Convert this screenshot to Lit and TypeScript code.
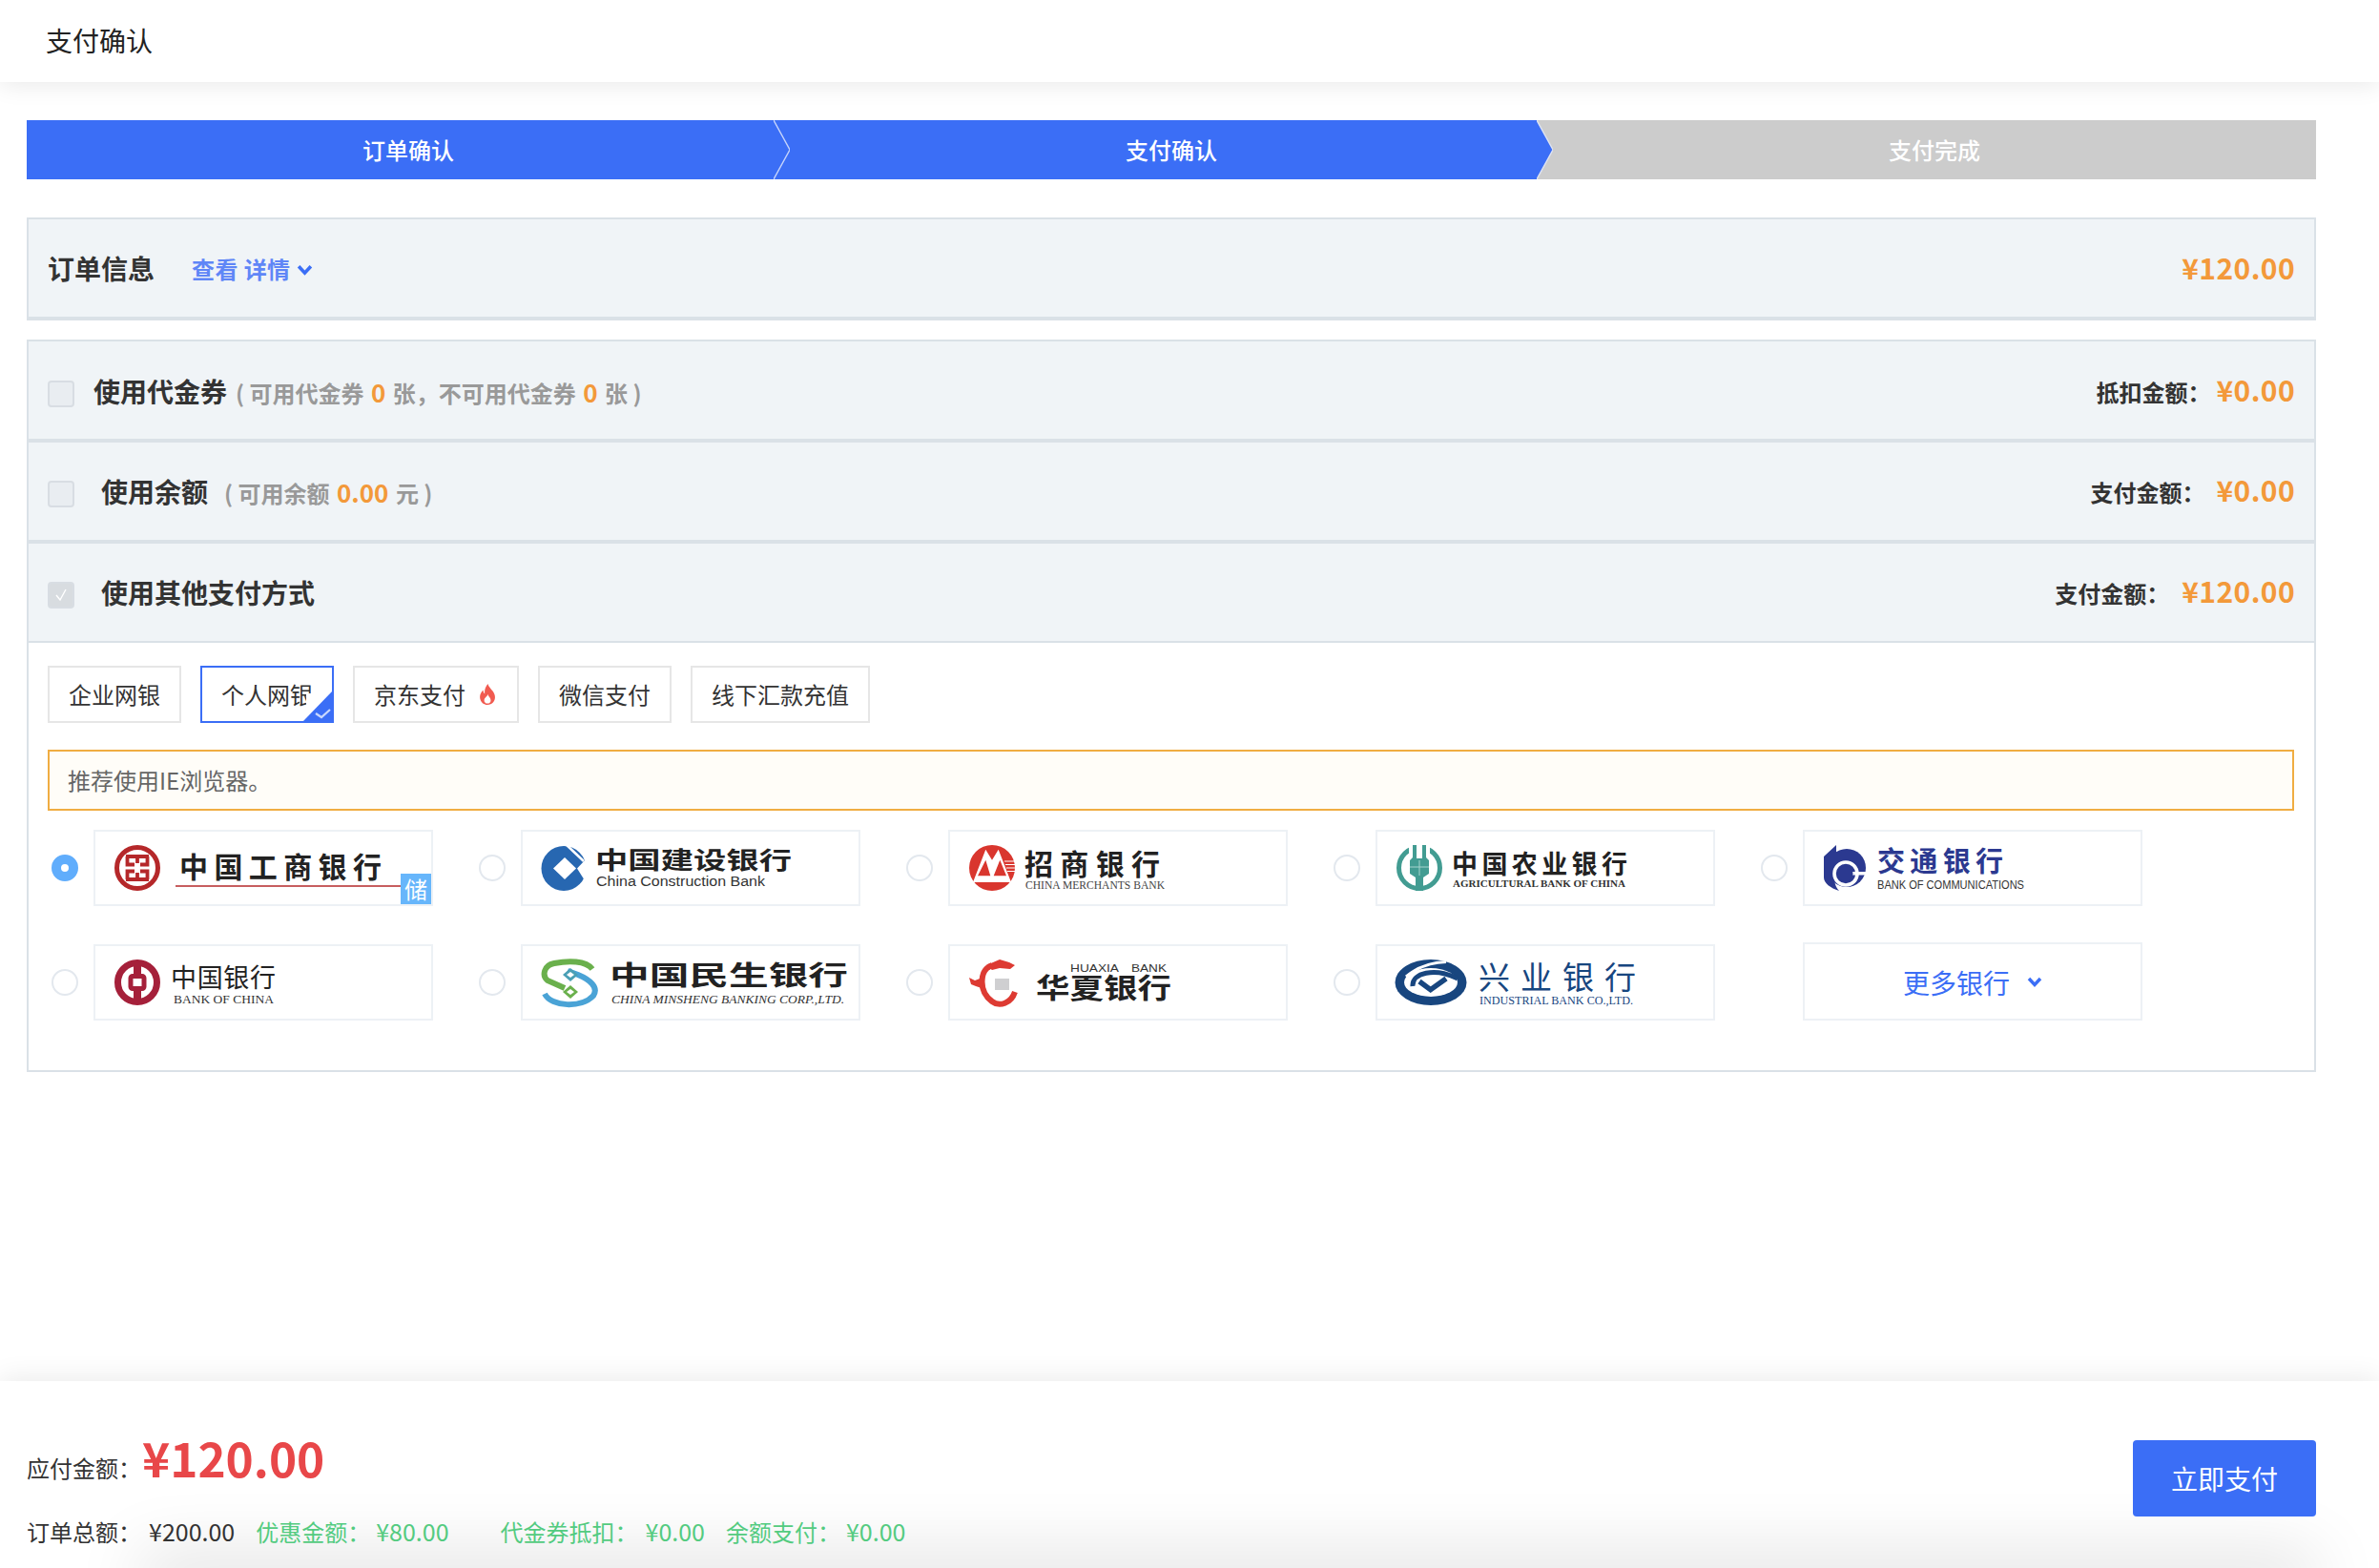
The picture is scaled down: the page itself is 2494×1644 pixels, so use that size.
import { LitElement, html, css, svg } from "lit";
import { customElement } from "lit/decorators.js";

const chevron = (cls: string) => html`<svg class=${cls} viewBox="0 0 16 11"><path d="M2 2 L8 8.5 L14 2" fill="none" stroke="currentColor" stroke-width="3.4"/></svg>`;

const LOGOS: Record<string, unknown> = {
  icbc: svg`
    <circle cx="44" cy="38" r="21.5" fill="none" stroke="#b5282a" stroke-width="5"/>
    <path d="M32 26 H56 M32 50 H56 M33.5 26 V34.5 H41 M54.5 26 V34.5 H47 M33.5 50 V41.5 H41 M54.5 50 V41.5 H47" fill="none" stroke="#b5282a" stroke-width="3.8"/>
    <path d="M44 26 V33 M44 43 V50" stroke="#b5282a" stroke-width="3.8"/>
    <text class="z b" x="88" y="47.5" font-size="30" fill="#222" textLength="212" lengthAdjust="spacing">中国工商银行</text>
    <path d="M84 57 H320" stroke="#b5282a" stroke-width="1.5"/>`,
  ccb: svg`
    <circle cx="43" cy="38.5" r="23.5" fill="#2767b1"/>
    <path d="M44 27 L56 38.5 L44 50 L32 38.5 Z" fill="#fff"/>
    <path d="M68 27 L57 38.5 L68 56 Z" fill="#fff"/>
    <path d="M45 13 L64 31" stroke="#fff" stroke-width="2.5"/>
    <text class="z b" x="76" y="38.5" font-size="25" fill="#222" textLength="206" lengthAdjust="spacingAndGlyphs">中国建设银行</text>
    <text class="s" x="77" y="56.5" font-size="15.5" fill="#333" textLength="177" lengthAdjust="spacingAndGlyphs">China Construction Bank</text>`,
  cmb: svg`
    <circle cx="44" cy="38" r="24" fill="#d9362e"/>
    <path d="M24 53 L37.3 18.7 L44 29.7 L50.7 18.7 L64 53 Z" fill="#fff"/>
    <path d="M29 46.3 L37.3 29.7 L42.3 46.3 Z M45.7 46.3 L52.3 29.7 L59 46.3 Z" fill="#d9362e"/>
    <path d="M57 31 H68.2 M58 34.5 H68.4 M59 38 H68.5 M60 41.5 H68.2" stroke="#fff" stroke-width="1.2"/>
    <text class="z b" x="78" y="45" font-size="30" fill="#222" textLength="142" lengthAdjust="spacing">招商银行</text>
    <text class="r" x="79" y="60" font-size="11.5" fill="#444" textLength="146" lengthAdjust="spacingAndGlyphs">CHINA MERCHANTS BANK</text>`,
  abc: svg`
    <circle cx="44" cy="38" r="21.5" fill="none" stroke="#429c92" stroke-width="5"/>
    <rect x="33" y="12" width="22" height="16" fill="#fff"/>
    <path d="M34 30 L37 27 V14 H51 V27 L54 30 V44 L48 48 V62 H40 V48 L34 44 Z" fill="#429c92"/>
    <rect x="41" y="14" width="6" height="14" fill="#fff"/>
    <path d="M34 37 H54 M44 30 V46" stroke="#a5d4ce" stroke-width="1"/>
    <text class="z b" x="78" y="44" font-size="27" fill="#222" textLength="184" lengthAdjust="spacing">中国农业银行</text>
    <text class="r b" x="79" y="58" font-size="11" fill="#333" textLength="181" lengthAdjust="spacingAndGlyphs">AGRICULTURAL BANK OF CHINA</text>`,
  bocom: svg`
    <circle cx="44" cy="38" r="20" fill="#2b3990"/>
    <path d="M20 26 L33 14 V40 C30 50 31 57 36 62 C27 59 20 54 20 48 Z" fill="#2b3990"/>
    <circle cx="43" cy="44" r="12" fill="none" stroke="#fff" stroke-width="3.6"/>
    <path d="M45 42 H66 V45.5 H45 Z" fill="#fff"/>
    <circle cx="42.5" cy="44" r="8" fill="#2b3990"/>
    <text class="z b" x="76" y="42" font-size="29" fill="#2b3990" textLength="132" lengthAdjust="spacing">交通银行</text>
    <text class="s" x="76" y="60" font-size="12" fill="#333" textLength="154" lengthAdjust="spacingAndGlyphs">BANK OF COMMUNICATIONS</text>`,
  boc: svg`
    <circle cx="44" cy="38" r="20.5" fill="none" stroke="#a5203a" stroke-width="7"/>
    <path d="M44 16 V60" stroke="#a5203a" stroke-width="8"/>
    <rect x="37" y="31.5" width="14" height="13" rx="2" fill="#fff" stroke="#a5203a" stroke-width="5"/>
    <text class="z" x="79" y="43" font-size="27" fill="#222" textLength="110" lengthAdjust="spacing">中国银行</text>
    <text class="r" x="82" y="60" font-size="13.5" fill="#333" textLength="105" lengthAdjust="spacingAndGlyphs">BANK OF CHINA</text>`,
  cmbc: svg`
    <path d="M73 24 C66 15 48 15 33 18 C22 20 20 31 26 36 L44 44" fill="none" stroke="#6ab04c" stroke-width="6"/>
    <path d="M23 50 C30 64 62 65 74 52 C80 43 70 35 58 30 L47 26" fill="none" stroke="#4aa3d6" stroke-width="6"/>
    <path d="M50 23 L58 30 L50 37 L42 30 Z" fill="#4a9fb5"/><path d="M50 27 L54 30 L50 33 L46 30 Z" fill="#fff"/>
    <path d="M50 41 L58 48 L50 55 L42 48 Z" fill="#6ab04c"/><path d="M50 45 L54 48 L50 51 L46 48 Z" fill="#fff"/>
    <text class="z b" x="91" y="41" font-size="28" fill="#222" textLength="250" lengthAdjust="spacingAndGlyphs">中国民生银行</text>
    <text class="r i" x="93" y="60" font-size="13" fill="#333" textLength="244" lengthAdjust="spacingAndGlyphs">CHINA MINSHENG BANKING CORP.,LTD.</text>`,
  hxb: svg`
    <path d="M68 48 C64 60 52 64 44 58 C36 52 32 44 34 32 C35 26 39 22 44 20" fill="none" stroke="#dd3a32" stroke-width="6"/>
    <path d="M38 20 L52 14 L62 17 L68 20 L63 24 L52 23 L44 25 Z M20 33 L26 36 L34 33 L33 44 L27 42 L22 40 Z" fill="#dd3a32"/>
    <rect x="47" y="34" width="15" height="12" fill="#cfcfd1"/>
    <text class="s" x="126" y="27" font-size="11.5" fill="#333" textLength="51" lengthAdjust="spacingAndGlyphs">HUAXIA</text>
    <text class="s" x="190" y="27" font-size="11.5" fill="#333" textLength="37" lengthAdjust="spacingAndGlyphs">BANK</text>
    <text class="z b" x="90" y="55" font-size="29" fill="#222" textLength="142" lengthAdjust="spacingAndGlyphs">华夏银行</text>`,
  cib: svg`
    <ellipse cx="56" cy="38" rx="37.5" ry="24" fill="#18467f"/>
    <ellipse cx="56" cy="38" rx="28" ry="15" fill="#fff"/>
    <path d="M72 16.5 C60 17 44 20 30 32" fill="none" stroke="#fff" stroke-width="3"/>
    <path d="M37 42 C36 28 60 22 84 34" fill="none" stroke="#18467f" stroke-width="5"/>
    <path d="M44 37 L55.7 45.7 L72 34" fill="none" stroke="#18467f" stroke-width="5.5"/>
    <text class="z" x="106" y="45" font-size="33" fill="#17467f" textLength="165" lengthAdjust="spacing">兴业银行</text>
    <text class="r" x="107" y="61" font-size="12" fill="#17467f" textLength="161" lengthAdjust="spacingAndGlyphs">INDUSTRIAL BANK CO.,LTD.</text>`,
};

const BANKS = ["icbc", "ccb", "cmb", "abc", "bocom", "boc", "cmbc", "hxb", "cib"];

@customElement("app-root")
export class AppRoot extends LitElement {
  static styles = css`
    :host { display: flex; flex-direction: column; min-height: 100vh; background: #fff; color: #333;
      font-family: "Noto Sans CJK SC", "Noto Sans", sans-serif; font-size: 24px; }
    * { box-sizing: border-box; }
    .top { height: 86px; padding: 0 0 2px 48px; display: flex; align-items: center; font-size: 28px; color: #222;
      background: #fff; box-shadow: 0 3px 24px rgba(0,0,0,.09); }
    main { flex: 1; padding: 40px 66px 0 28px; }
    .steps { display: flex; height: 62px; }
    .step { flex: 1; position: relative; display: flex; align-items: center; justify-content: center; padding-bottom: 2px; color: #fff; font-weight: 500; background: #3b6ef6; }
    .step.off { background: #ccc; }
    .arrow { position: absolute; right: -1px; top: 0; width: 18px; height: 62px; display: block; }
    .sec { border: 2px solid #dae1e7; background: #f0f4f7; display: flex; align-items: center; justify-content: space-between; padding: 0 20px 0 20px; }
    .order { margin-top: 40px; height: 108px; border-bottom-width: 4px; }
    .left, .right { display: flex; align-items: center; font-weight: 700; }
    .h { font-size: 28px; color: #333; font-weight: 700; white-space: pre; }
    .more { color: #5f86f7; margin-left: 39px; display: flex; align-items: center; white-space: pre; letter-spacing: .4px; }
    .chev { width: 17px; height: 12px; margin-left: 7px; color: #3b6ef6; margin-top: 3px; }
    .amt { color: #f3993a; font-size: 30px; font-weight: 700; letter-spacing: .4px; }
    .order .amt { margin-bottom: 2px; }
    .row .amt { margin-bottom: 4px; }
    .m6 { margin-left: 6px; } .m12 { margin-left: 12px; } .m13 { margin-left: 13px; }
    .lab { color: #333; }
    .box { margin-top: 20px; border: 2px solid #dae1e7; border-top: none; background: #fff; padding-bottom: 52px; }
    .row { border-width: 0 0 4px 0; padding-top: 2px; }
    .row.r1 { height: 108px; border-top: 2px solid #dae1e7; padding-top: 4px; }
    .row.r2 { height: 106px; }
    .row.r3 { height: 104px; border-bottom-width: 2px; }
    .row .left, .row .right { padding-bottom: 2px; }
    .cb { width: 28px; height: 28px; margin-top: 6px; border-radius: 4px; border: 2px solid #d8dde3; background: #e9edf1; flex: none; display: flex; align-items: center; justify-content: center; }
    .cb.on { background: #d8dce0; }
    .cb svg { width: 18px; height: 18px; }
    .g20 { margin-left: 20px; } .g29 { margin-left: 28px; }
    .sub { color: #999; margin-left: 9px; white-space: pre; font-size: 24px; }
    .sub.w { margin-left: 17px; }
    .sub b { color: #f3993a; font-weight: 700; font-size: 26px; margin: 0 2px; }
    .tabs { display: flex; gap: 20px; padding: 24px 0 0 20px; }
    .tab { position: relative; height: 60px; border: 2px solid #e6e6e6; padding: 0 20px 2px; display: flex; align-items: center; color: #333; background: #fff; }
    .tab.sel { border-color: #3b6ef6; }
    .corner { position: absolute; right: 0; bottom: 0; width: 30px; height: 32px; display: block; }
    .fire { width: 18px; height: 22px; margin: 2px 2px 0 14px; }
    .alert { margin: 28px 21px 0 20px; height: 64px; border: 2px solid #f0ad42; background: #fffdf8; color: #666; padding: 0 0 2px 19px; display: flex; align-items: center; }
    .banks { display: grid; grid-template-columns: repeat(5, 448px); row-gap: 38px; align-items: end; padding: 20px 0 0 24px; }
    .bank { display: flex; align-items: center; gap: 16px; }
    .radio { width: 28px; height: 28px; border-radius: 50%; border: 2px solid #e3e8ee; background: #fff; flex: none; }
    .radio.on { border: 10px solid #60adfc; }
    .radio.none { visibility: hidden; }
    .logo { position: relative; width: 356px; height: 80px; border: 2px solid #edf1f5; background: #fff; }
    .logo svg { display: block; width: 352px; height: 76px; }
    .tag { position: absolute; right: 0; bottom: 0; width: 32px; height: 32px; background: #67b6fb; color: #fff; font-size: 24px; line-height: 32px; text-align: center; }
    .logo.morebank { height: 82px; display: flex; align-items: center; justify-content: center; gap: 18px; padding-top: 2px; color: #3b6ef6; font-size: 28px; }
    .morebank svg.chv { width: 16px; height: 11px; margin-top: -2px; }
    .z { font-family: "Noto Sans CJK SC", sans-serif; }
    .r { font-family: "Liberation Serif", serif; }
    .s { font-family: "Liberation Sans", sans-serif; }
    .b { font-weight: 700; }
    .i { font-style: italic; }
    footer { position: relative; height: 196px; background: #fff; display: flex; justify-content: space-between; padding: 62px 66px 0 28px;
      box-shadow: 0 -4px 26px rgba(0,0,0,.08); overflow: hidden; }
    .glow { position: absolute; left: 160px; right: 80px; bottom: -20px; height: 20px; box-shadow: 0 0 70px 14px rgba(0,0,0,.13); }
    .info { position: relative; }
    .l1 { display: flex; align-items: baseline; height: 66px; margin-top: -15px; }
    .big { font-size: 49.5px; font-weight: 700; color: #e84749; line-height: 66px; margin-left: 1px; }
    .l2 { display: flex; height: 36px; align-items: center; white-space: pre; margin-top: 26px; }
    .l2 .n { font-size: 25px; }
    .g { color: #53cb80; }
    .pay { position: relative; width: 192px; height: 80px; background: #3b6ef6; border: none; border-radius: 4px; color: #fff; font: inherit; font-size: 28px; padding-bottom: 2px; }
    .a8 { margin-left: 8px; } .a7 { margin-left: 6px; }
    .p22 { margin-left: 22px; } .p54 { margin-left: 54px; }
  `;

  private logo(k: string, tag = false) {
    return html`<div class="logo"><svg viewBox="0 0 352 76">${LOGOS[k]}</svg>${tag ? html`<span class="tag">储</span>` : ""}</div>`;
  }

  render() {
    return html`
      <header class="top">支付确认</header>
      <main>
        <div class="steps">
          <div class="step">订单确认
            <svg class="arrow" viewBox="0 0 18 62"><path d="M0 0 L17 31 L0 62" fill="none" stroke="#c6d4fb" stroke-width="1.4"/></svg>
          </div>
          <div class="step">支付确认
            <svg class="arrow" viewBox="0 0 18 62"><rect width="18" height="62" fill="#ccc"/><path d="M0 0 L17 31 L0 62 Z" fill="#3b6ef6"/><path d="M0 0 L17 31 L0 62" fill="none" stroke="#dfe4f2" stroke-width="1.4"/></svg>
          </div>
          <div class="step off">支付完成</div>
        </div>

        <section class="sec order">
          <div class="left"><span class="h">订单信息</span><span class="more">查看 详情${chevron("chev")}</span></div>
          <div class="right"><span class="amt">¥120.00</span></div>
        </section>

        <section class="box">
          <div class="sec row r1">
            <div class="left"><span class="cb"></span><span class="h g20">使用代金券</span>
              <span class="sub">( 可用代金券 <b>0</b> 张，不可用代金券 <b>0</b> 张 )</span></div>
            <div class="right"><span class="lab">抵扣金额：</span><span class="amt m6">¥0.00</span></div>
          </div>
          <div class="sec row r2">
            <div class="left"><span class="cb"></span><span class="h g29">使用余额</span>
              <span class="sub w">( 可用余额 <b>0.00</b> 元 )</span></div>
            <div class="right"><span class="lab">支付金额：</span><span class="amt m12">¥0.00</span></div>
          </div>
          <div class="sec row r3">
            <div class="left"><span class="cb on"><svg viewBox="0 0 18 18"><path d="M4 9 L8 14 L14 3" fill="none" stroke="#fff" stroke-width="1.4"/></svg></span><span class="h g29">使用其他支付方式</span></div>
            <div class="right"><span class="lab">支付金额：</span><span class="amt m13">¥120.00</span></div>
          </div>

          <div class="tabs">
            <div class="tab">企业网银</div>
            <div class="tab sel">个人网银
              <svg class="corner" viewBox="0 0 30 32"><path d="M3 3 H8 V0 H30 V32 H3 Z" fill="#fff"/><path d="M0 32 L30 1 V32 Z" fill="#3b6ef6"/><path d="M13 24 L19 28 L28 20" fill="none" stroke="#c9d8fd" stroke-width="2.2"/></svg>
            </div>
            <div class="tab">京东支付
              <svg class="fire" viewBox="0 0 18 22"><path d="M9.5 0 C10.5 4 14 6 16 10 C18.5 15 16 22 9 22 C2.5 22 -0.5 15 2 10 C2.8 8.4 3.6 7.4 4.5 6.5 C4.6 8.6 5.2 9.8 6.2 10.4 C5.6 6.2 7.4 2.4 9.5 0 Z" fill="#f15b50"/><path d="M9.5 11 C10 13.5 12.5 14.5 12.5 17.2 C12.5 19.4 11 20.6 9 20.6 C7 20.6 5.6 19.2 5.6 17.2 C5.6 14.6 8.4 13.8 9.5 11 Z" fill="#fff"/></svg>
            </div>
            <div class="tab">微信支付</div>
            <div class="tab">线下汇款充值</div>
          </div>

          <div class="alert">推荐使用IE浏览器。</div>

          <div class="banks">
            ${BANKS.map((k, i) => html`<div class="bank"><span class="radio ${i === 0 ? "on" : ""}"></span>${this.logo(k, i === 0)}</div>`)}
            <div class="bank"><span class="radio none"></span><div class="logo morebank">更多银行${chevron("chv")}</div></div>
          </div>
        </section>
      </main>
      <footer>
        <div class="glow"></div>
        <div class="info">
          <div class="l1"><span>应付金额：</span><span class="big">¥120.00</span></div>
          <div class="l2"><span>订单总额：</span><span class="n a8">¥200.00</span><span class="g p22">优惠金额：</span><span class="g n a7">¥80.00</span><span class="g p54">代金券抵扣：</span><span class="g n a8">¥0.00</span><span class="g p22">余额支付：</span><span class="g n a7">¥0.00</span></div>
        </div>
        <button class="pay">立即支付</button>
      </footer>
    `;
  }
}
